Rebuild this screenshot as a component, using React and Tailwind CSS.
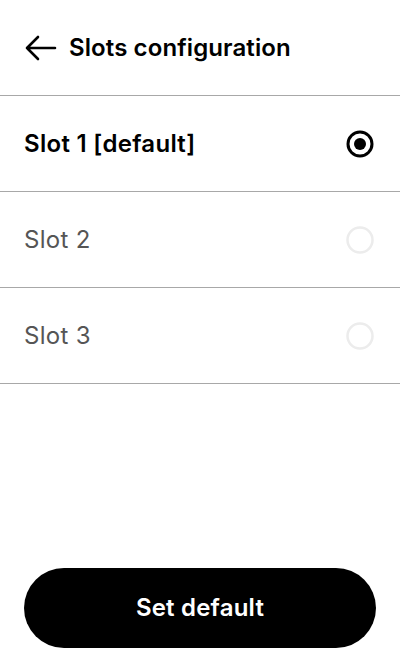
const slots = [
  { id: 1, label: 'Slot 1 [default]', selected: true },
  { id: 2, label: 'Slot 2', selected: false },
  { id: 3, label: 'Slot 3', selected: false },
]

const Radio = ({ selected }) => (
  <svg width="30" height="30" viewBox="0 0 30 30">
    {selected ? (
      <>
        <circle cx="15" cy="15" r="12" fill="none" stroke="#000" strokeWidth="3" />
        <circle cx="15" cy="15" r="6" fill="#000" />
      </>
    ) : (
      <circle cx="15" cy="15" r="12.5" fill="none" stroke="#ececec" strokeWidth="2.5" />
    )}
  </svg>
)

export default function App() {
  return (
    <div className="w-[400px] h-[672px] bg-white flex flex-col" style={{ fontFamily: 'Inter, "Noto Sans", sans-serif' }}>
      <div className="h-[96px] flex items-center px-6 gap-3 border-b border-[#a8a8a8]">
        <svg width="33" height="28" viewBox="0 0 33 28" className="shrink-0">
          <path d="M31 14H3M14 3L3 14l11 11" fill="none" stroke="#000" strokeWidth="2.6" strokeLinecap="round" strokeLinejoin="round" />
        </svg>
        <span className="text-[24px] font-semibold text-black tracking-[0.1px]">Slots configuration</span>
      </div>

      {slots.map((slot) => (
        <div key={slot.id} className="h-[96px] flex items-center justify-between pl-6 pr-[25px] border-b border-[#a8a8a8]">
          <span className={`text-[24px] tracking-[0.3px] ${slot.selected ? 'font-semibold text-black' : 'text-[#555555]'}`}>
            {slot.label}
          </span>
          <Radio selected={slot.selected} />
        </div>
      ))}

      <div className="flex-1" />

      <div className="px-6 pb-6">
        <button className="w-full h-[80px] rounded-full bg-black text-white text-[24px] font-semibold tracking-[0.2px]">
          Set default
        </button>
      </div>
    </div>
  )
}
